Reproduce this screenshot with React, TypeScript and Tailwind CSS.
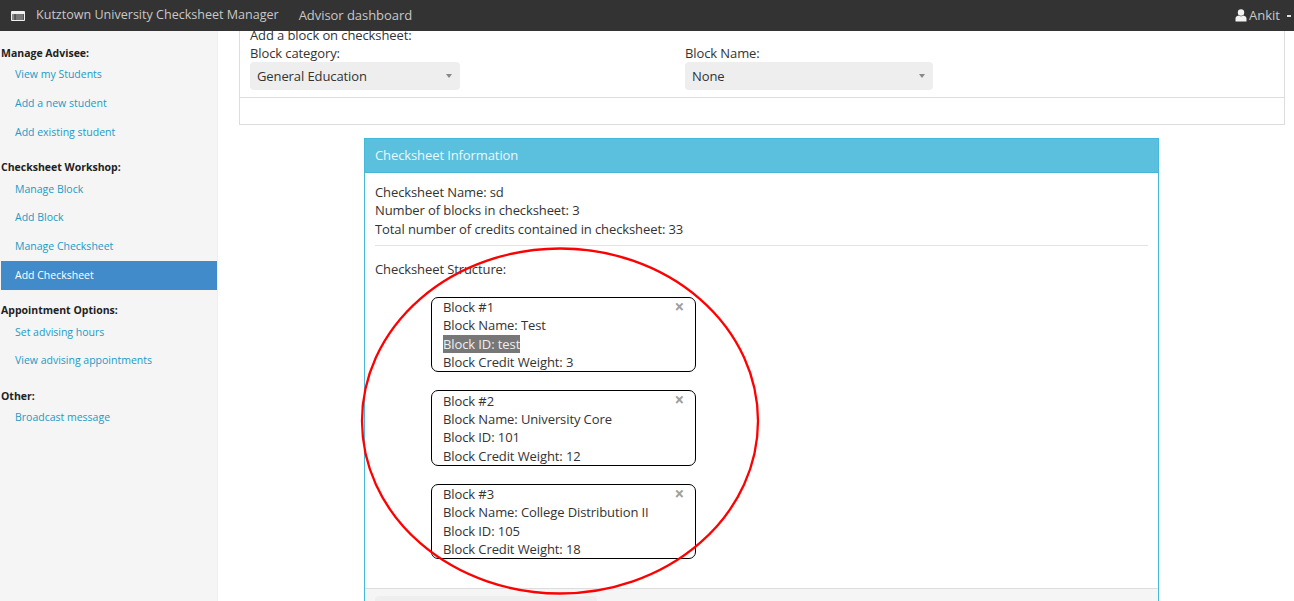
const font = { fontFamily: '"Open Sans", sans-serif' };

const sidebarGroups = [
  { title: "Manage Advisee:", links: ["View my Students", "Add a new student", "Add existing student"] },
  { title: "Checksheet Workshop:", links: ["Manage Block", "Add Block", "Manage Checksheet", "Add Checksheet"] },
  { title: "Appointment Options:", links: ["Set advising hours", "View advising appointments"] },
  { title: "Other:", links: ["Broadcast message"] },
];

const blocks = [
  { n: 1, name: "Test", id: "test", credits: 3 },
  { n: 2, name: "University Core", id: "101", credits: 12 },
  { n: 3, name: "College Distribution II", id: "105", credits: 18 },
];

function Select({ value, width }: { value: string; width: string }) {
  return (
    <div className={`${width} h-7 bg-[#eeeeee] rounded-sm flex items-center justify-between pl-[7px] pr-2 text-[#333]`}>
      <span>{value}</span>
      <span className="w-0 h-0 border-x-[3.5px] border-x-transparent border-t-[4px] border-t-[#888]" />
    </div>
  );
}

function BlockCard({ block }: { block: (typeof blocks)[number] }) {
  return (
    <div
      className={`relative w-[265px] border border-black rounded-[7px] pl-[11px] text-[#333] ${
        block.n === 2 ? "h-[76px] pt-[0.6px] leading-[18.4px]" : "h-[75px] leading-[18.5px]"
      }`}
    >
      <div>Block #{block.n}</div>
      <div>Block Name: {block.name}</div>
      <div>
        {block.id === "test" ? (
          <span className="bg-[#777] text-[#eee] inline-block h-[18px]">Block ID: {block.id}</span>
        ) : (
          <>Block ID: {block.id}</>
        )}
      </div>
      <div>Block Credit Weight: {block.credits}</div>
      <span className="absolute right-[11px] top-0 text-[17px] leading-[17px] font-bold text-[#a0a0a0]">×</span>
    </div>
  );
}

export default function App() {
  return (
    <div className="relative w-[1294px] h-[601px] overflow-hidden bg-white flex flex-col" style={font}>
      {/* top nav */}
      <header className="h-[31px] shrink-0 bg-[#333333] flex items-center text-[13px] text-[#c8c8c8] z-10">
        <svg width="14" height="10" viewBox="0 0 14 10" className="ml-[11px] mr-[11px]">
          <rect width="14" height="10" rx="1" fill="#f0f0f0" />
          <rect x="1" y="3" width="12" height="6" fill="#333" />
          <rect x="1" y="3.5" width="2.5" height="1" fill="#ddd" />
          <rect x="1" y="5.5" width="2.5" height="1" fill="#ddd" />
          <rect x="1" y="7.5" width="2.5" height="1" fill="#ddd" />
          <rect x="4.5" y="3.5" width="8" height="1" fill="#bbb" />
          <rect x="4.5" y="5.5" width="8" height="1" fill="#bbb" />
          <rect x="4.5" y="7.5" width="8" height="1" fill="#bbb" />
        </svg>
        <span className="text-[12.55px]">Kutztown University Checksheet Manager</span>
        <span className="ml-[20px] tracking-[-0.05px]">Advisor dashboard</span>
        <div className="ml-auto flex items-center pr-[3px]">
          <svg width="12" height="13" viewBox="0 0 12 13" className="mr-[2px]">
            <circle cx="6" cy="3.5" r="3.2" fill="#f2f2f2" />
            <path d="M0.5 12.5V9.5C0.5 7.8 2 7 3.5 6.6C4.5 7.6 7.5 7.6 8.5 6.6C10 7 11.5 7.8 11.5 9.5V12.5Z" fill="#f2f2f2" />
          </svg>
          <span>Ankit</span>
          <span className="ml-[7px] w-[4px] h-[2px] bg-[#ddd] mt-[1px]" />
        </div>
      </header>

      <div className="flex flex-1 min-h-0">
        {/* sidebar */}
        <aside className="w-[218px] shrink-0 bg-[#f5f5f5] border-r border-[#eeeeee] pl-[1px] pt-[15px] text-[10.5px]">
          {sidebarGroups.map((group) => (
            <div key={group.title} className="mb-[13.3px]">
              <div className="font-bold text-[#222] leading-[15px]">{group.title}</div>
              {group.links.map((link) => (
                <div
                  key={link}
                  className={`h-[28.65px] flex items-center pl-[14px] ${
                    link === "Add Checksheet" ? "bg-[#428bca] text-white" : "text-[#1a9bc7]"
                  }`}
                >
                  {link}
                </div>
              ))}
            </div>
          ))}
        </aside>

        {/* main, scrolled down a bit so the first card is cut by the nav */}
        <main className="flex-1 min-w-0 overflow-hidden pl-[21px] pr-[9px] text-[13px] tracking-[-0.1px] text-[#333]">
          <div className="-mt-[5px] border border-t-0 border-[#dddddd] h-[99px]">
            <div className="h-[72px] pl-[10px] border-b border-[#dddddd] leading-[18px]">
              <div>Add a block on checksheet:</div>
              <div className="flex">
                <div className="w-[435px]">
                  <div>Block category:</div>
                  <Select value="General Education" width="w-[210px]" />
                </div>
                <div>
                  <div>Block Name:</div>
                  <Select value="None" width="w-[248px]" />
                </div>
              </div>
            </div>
          </div>

          <section className="ml-[125px] mt-[13px] w-[795px] border border-[#46b8da]">
            <div className="h-[34px] bg-[#5bc0de] border-b border-[#46b8da] flex items-center pl-[10px] text-[#eaf7fb]">
              Checksheet Information
            </div>
            <div className="px-[10px] pt-[10px] leading-[18.4px] h-[415px]">
              <div>Checksheet Name: sd</div>
              <div>Number of blocks in checksheet: 3</div>
              <div>Total number of credits contained in checksheet: 33</div>
              <div className="mt-[6.3px] border-t border-[#e3e3e3] pt-[14px]">Checksheet Structure:</div>
              <div className="mt-[19px] ml-[56px] flex flex-col gap-[18px]">
                {blocks.map((block) => (
                  <BlockCard key={block.n} block={block} />
                ))}
              </div>
            </div>
            <div className="border-t border-[#dddddd] bg-[#f5f5f5] h-[40px] pl-[10px] pt-[7px]">
              <div className="w-[222px] h-[20px] bg-[#eeeeee] rounded-sm" />
            </div>
          </section>
        </main>
      </div>

      {/* hand-drawn annotation circle */}
      <svg className="absolute left-[360px] top-[246px] pointer-events-none" width="400" height="350" viewBox="0 0 400 350">
        <ellipse cx="200" cy="175" rx="198" ry="172.5" fill="none" stroke="#ff0000" strokeWidth="2.3" />
      </svg>
    </div>
  );
}
